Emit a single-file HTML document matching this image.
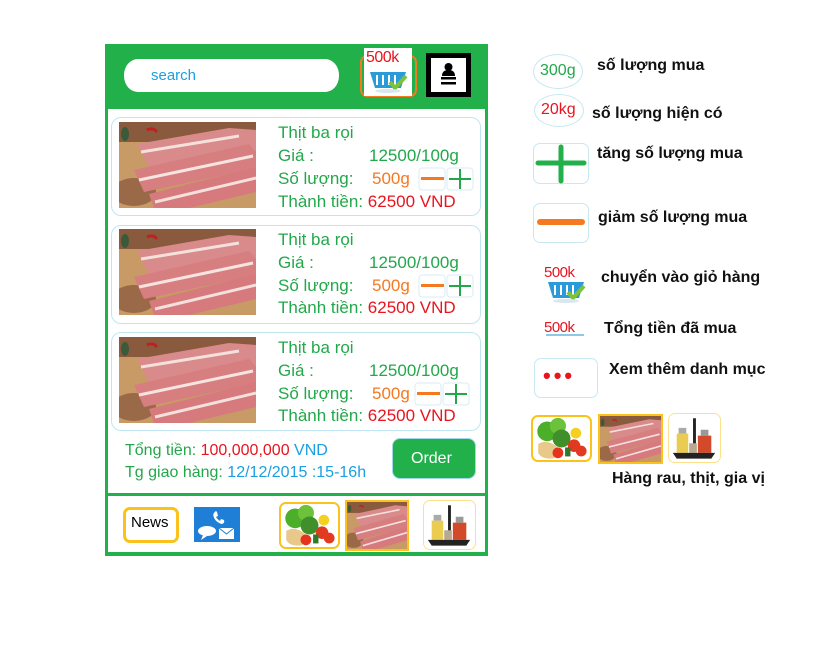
<!DOCTYPE html>
<html><head><meta charset="utf-8"><style>
*{margin:0;padding:0;box-sizing:border-box}
body{width:826px;height:668px;background:#fff;position:relative;overflow:hidden;font-family:"Liberation Sans",sans-serif}
.a{position:absolute}
.g{color:#22a84a}.r{color:#e8141e}.o{color:#f47920}.b{color:#1a9fe0}
.card{position:absolute;left:111px;width:370px;height:99px;border:1.5px solid #bfe6f0;border-radius:10px;background:#fff}
.ct{position:absolute;font-size:17px;white-space:nowrap}
.lg{position:absolute;font-size:16px;font-weight:bold;color:#111;white-space:nowrap}
</style></head><body>
<svg width="0" height="0" style="position:absolute">
<defs>
<symbol id="meat" viewBox="0 0 137 86">
<rect width="137" height="86" fill="#c89a66"/>
<rect y="0" width="137" height="20" fill="#8a5a3e"/>
<ellipse cx="15" cy="70" rx="22" ry="14" fill="#9a6a48"/>
<path d="M18 22 L110 6 L137 8 L137 28 L30 45 Z" fill="#d98a8a"/>
<path d="M22 30 L120 14" stroke="#f4e0dc" stroke-width="3"/>
<path d="M15 48 L130 22 L137 30 L137 46 L25 70 Z" fill="#d77e80"/>
<path d="M20 58 L134 34" stroke="#f6e4e0" stroke-width="3"/>
<path d="M30 72 L137 45 L137 70 L70 86 L35 86 Z" fill="#d67a7e"/>
<path d="M36 80 L137 56" stroke="#f4e0dc" stroke-width="3"/>
<path d="M28 8 q6 -3 10 2" stroke="#c02020" stroke-width="3" fill="none"/>
<ellipse cx="6" cy="12" rx="4" ry="7" fill="#3a5a3a"/>
</symbol>
<symbol id="veg" viewBox="0 0 60 48">
<rect width="60" height="48" fill="#fff"/>
<circle cx="14" cy="16" r="11" fill="#4caf2a"/>
<circle cx="26" cy="10" r="9" fill="#6cc23a"/>
<path d="M4 30 q10 -6 22 4 l-4 12 q-14 2 -18 -6z" fill="#e9c98a"/>
<circle cx="30" cy="24" r="10" fill="#3f8f2a"/>
<circle cx="46" cy="18" r="6" fill="#f4d020"/>
<circle cx="44" cy="32" r="7" fill="#e23a20"/>
<circle cx="52" cy="38" r="6" fill="#e23a20"/>
<circle cx="26" cy="40" r="6" fill="#e5331e"/>
<rect x="34" y="34" width="6" height="10" fill="#2f7a2a"/>
</symbol>
<symbol id="spice" viewBox="0 0 52 48">
<rect width="52" height="48" fill="#fff"/>
<rect x="25" y="4" width="3" height="30" fill="#222"/>
<path d="M8 20 h12 v20 h-12z" fill="#e8c640" opacity=".9"/>
<path d="M10 14 h8 v6 h-8z" fill="#aaa"/>
<path d="M30 22 h14 v18 h-14z" fill="#d24a2a"/>
<path d="M33 16 h8 v6 h-8z" fill="#999"/>
<rect x="21" y="30" width="8" height="10" fill="#b8a890"/>
<path d="M4 40 h44 l-4 6 h-36z" fill="#222"/>
</symbol>
<symbol id="basket" viewBox="0 0 40 34">
<path d="M2 12 h36 l-5 16 h-26z" fill="#2a9bd8"/>
<path d="M9 15 v10 M15 15 v10 M21 15 v10 M27 15 v10" stroke="#fff" stroke-width="2"/>
<path d="M22 22 l5 6 l11 -12" stroke="#7cc23a" stroke-width="4" fill="none"/>
<ellipse cx="20" cy="31" rx="13" ry="2" fill="#d8e8f0"/>
</symbol>
</defs></svg>

<div class="a" style="left:105px;top:44px;width:383px;height:512px;background:#22b04b"></div>
<div class="a" style="left:108px;top:109px;width:377px;height:384px;background:#fff"></div>
<div class="a" style="left:108px;top:496px;width:377px;height:56px;background:#fff"></div>

<div class="a" style="left:124px;top:59px;width:215px;height:33px;background:#fff;border-radius:14px/16px"></div>
<div class="a b" style="left:151px;top:67px;font-size:15px">search</div>
<div class="a" style="left:360px;top:55px;width:57px;height:42px;border:2px solid #f47920;border-radius:7px"></div>
<div class="a" style="left:364px;top:48px;width:48px;height:48px;background:#fff"></div>
<svg class="a" style="left:367px;top:60px" width="42" height="34"><use href="#basket"/></svg>
<div class="a r" style="left:366px;top:49px;font-size:16px;letter-spacing:-.5px">500k</div>
<div class="a" style="left:426px;top:53px;width:45px;height:44px;background:#000"></div>
<div class="a" style="left:431px;top:58px;width:35px;height:34px;background:#fff"></div>
<svg class="a" style="left:431px;top:58px" width="35" height="34"><circle cx="17.5" cy="9" r="4" fill="#000"/><path d="M11 18 q0 -6 6.5 -6 q6.5 0 6.5 6z" fill="#000"/><rect x="10" y="19" width="15" height="2.5"/><rect x="10" y="24" width="15" height="2.5"/></svg>

<div class="card" style="top:117px"></div>
<div class="card" style="top:225px"></div>
<div class="card" style="top:332px"></div>
<svg class="a" style="left:119px;top:122px" width="137" height="86"><use href="#meat"/></svg>
<svg class="a" style="left:119px;top:229px" width="137" height="86"><use href="#meat"/></svg>
<svg class="a" style="left:119px;top:337px" width="137" height="86"><use href="#meat"/></svg>

<div class="ct g" style="left:278px;top:123px">Thịt ba rọi</div>
<div class="ct g" style="left:278px;top:146px">Giá :</div>
<div class="ct g" style="left:369px;top:146px">12500/100g</div>
<div class="ct g" style="left:278px;top:169px">Số lượng:</div>
<div class="ct o" style="left:372px;top:169px">500g</div>
<div class="ct g" style="left:278px;top:192px">Thành tiền: <span class="r">62500 VND</span></div>

<div class="ct g" style="left:278px;top:230px">Thịt ba rọi</div>
<div class="ct g" style="left:278px;top:253px">Giá :</div>
<div class="ct g" style="left:369px;top:253px">12500/100g</div>
<div class="ct g" style="left:278px;top:276px">Số lượng:</div>
<div class="ct o" style="left:372px;top:276px">500g</div>
<div class="ct g" style="left:278px;top:298px">Thành tiền: <span class="r">62500 VND</span></div>

<div class="ct g" style="left:278px;top:338px">Thịt ba rọi</div>
<div class="ct g" style="left:278px;top:361px">Giá :</div>
<div class="ct g" style="left:369px;top:361px">12500/100g</div>
<div class="ct g" style="left:278px;top:384px">Số lượng:</div>
<div class="ct o" style="left:372px;top:384px">500g</div>
<div class="ct g" style="left:278px;top:406px">Thành tiền: <span class="r">62500 VND</span></div>

<svg class="a" style="left:418px;top:166px" width="60" height="26"><rect x="1" y="2" width="26" height="22" rx="3" fill="none" stroke="#d8eef4"/><rect x="29" y="2" width="26" height="22" rx="3" fill="none" stroke="#d8eef4"/><rect x="3" y="11" width="23" height="3" fill="#f47920"/><path d="M31 13 h22 M42 3 v20" stroke="#22a84a" stroke-width="2"/></svg>
<svg class="a" style="left:418px;top:273px" width="60" height="26"><rect x="1" y="2" width="26" height="22" rx="3" fill="none" stroke="#d8eef4"/><rect x="29" y="2" width="26" height="22" rx="3" fill="none" stroke="#d8eef4"/><rect x="3" y="11" width="23" height="3" fill="#f47920"/><path d="M31 13 h22 M42 3 v20" stroke="#22a84a" stroke-width="2"/></svg>
<svg class="a" style="left:414px;top:381px" width="60" height="26"><rect x="1" y="2" width="26" height="22" rx="3" fill="none" stroke="#d8eef4"/><rect x="29" y="2" width="26" height="22" rx="3" fill="none" stroke="#d8eef4"/><rect x="3" y="11" width="23" height="3" fill="#f47920"/><path d="M31 13 h22 M42 3 v20" stroke="#22a84a" stroke-width="2"/></svg>

<div class="ct g" style="left:125px;top:442px;font-size:16px">Tổng tiền: <span class="r">100,000,000</span> <span class="b">VND</span></div>
<div class="ct g" style="left:125px;top:464px;font-size:16px">Tg giao hàng: <span class="b">12/12/2015 :15-16h</span></div>
<div class="a" style="left:392px;top:438px;width:84px;height:41px;background:#22b04b;border-radius:8px;border:1px solid #9fd8e8"></div>
<div class="a" style="left:411px;top:450px;color:#fff;font-size:16px">Order</div>

<div class="a" style="left:123px;top:507px;width:56px;height:36px;border:3px solid #fbc21b;border-radius:7px"></div>
<div class="a" style="left:131px;top:514px;font-size:15px">News</div>
<div class="a" style="left:194px;top:507px;width:46px;height:35px;background:#1f7ed6"></div>
<svg class="a" style="left:194px;top:507px" width="46" height="35"><path d="M22 4 q-4 2 -2 7 q3 5 8 6 q3 -1 2 -4 l-3 -1 l-1 2 q-3 -2 -4 -4 l2 -1 l-1 -4z" fill="#fff"/><ellipse cx="13" cy="24" rx="9" ry="5" fill="#fff"/><path d="M9 28 l-2 5 l6 -4z" fill="#fff"/><rect x="25" y="21" width="15" height="11" fill="#fff"/><path d="M25 21 l7.5 6 l7.5 -6" stroke="#1f7ed6" fill="none"/></svg>
<div class="a" style="left:279px;top:502px;width:61px;height:47px;border:2px solid #fbc21b;border-radius:7px;overflow:hidden"><svg width="57" height="43"><use href="#veg"/></svg></div>
<div class="a" style="left:345px;top:500px;width:64px;height:51px;border:2px solid #fbc21b;overflow:hidden"><svg width="60" height="47" viewBox="0 0 137 86" preserveAspectRatio="none"><use href="#meat"/></svg></div>
<div class="a" style="left:423px;top:500px;width:53px;height:50px;border:1.5px solid #fde08a;border-radius:7px;overflow:hidden"><svg width="50" height="47"><use href="#spice"/></svg></div>

<div class="a" style="left:533px;top:54px;width:50px;height:35px;border:1px solid #c8e8f2;border-radius:50%"></div>
<div class="a g" style="left:540px;top:62px;font-size:16px">300g</div>
<div class="lg" style="left:597px;top:57px">số lượng mua</div>
<div class="a" style="left:534px;top:94px;width:50px;height:33px;border:1px solid #c8e8f2;border-radius:50%"></div>
<div class="a r" style="left:541px;top:101px;font-size:16px">20kg</div>
<div class="lg" style="left:592px;top:105px">số lượng hiện có</div>
<div class="a" style="left:533px;top:143px;width:56px;height:41px;border:1px solid #c8e8f2;border-radius:7px"></div>
<svg class="a" style="left:533px;top:143px" width="56" height="41"><path d="M5 20 h46 M28 4 v34" stroke="#22b04b" stroke-width="5" stroke-linecap="round"/></svg>
<div class="lg" style="left:597px;top:145px">tăng số lượng mua</div>
<div class="a" style="left:533px;top:203px;width:56px;height:40px;border:1px solid #c8e8f2;border-radius:7px"></div>
<div class="a" style="left:537px;top:219px;width:48px;height:6px;background:#f47920;border-radius:3px"></div>
<div class="lg" style="left:598px;top:209px">giảm số lượng mua</div>
<svg class="a" style="left:545px;top:270px" width="42" height="34"><use href="#basket"/></svg>
<div class="a r" style="left:544px;top:264px;font-size:15px;letter-spacing:-.5px">500k</div>
<div class="lg" style="left:601px;top:269px">chuyển vào giỏ hàng</div>
<div class="a r" style="left:544px;top:319px;font-size:15px;letter-spacing:-.5px">500k</div>
<div class="a" style="left:546px;top:334px;width:38px;height:2px;background:#8cc8e8"></div>
<div class="lg" style="left:604px;top:320px">Tổng tiền đã mua</div>
<div class="a" style="left:534px;top:358px;width:64px;height:40px;border:1px solid #c8e8f2;border-radius:7px"></div>
<div class="a r" style="left:543px;top:363px;font-size:22px;letter-spacing:3px;font-weight:bold">•••</div>
<div class="lg" style="left:609px;top:361px">Xem thêm danh mục</div>
<div class="a" style="left:531px;top:415px;width:61px;height:47px;border:2px solid #fbc21b;border-radius:7px;overflow:hidden"><svg width="57" height="43"><use href="#veg"/></svg></div>
<div class="a" style="left:598px;top:414px;width:65px;height:50px;border:2px solid #fbc21b;overflow:hidden"><svg width="61" height="46" viewBox="0 0 137 86" preserveAspectRatio="none"><use href="#meat"/></svg></div>
<div class="a" style="left:668px;top:413px;width:53px;height:50px;border:1.5px solid #fde08a;border-radius:7px;overflow:hidden"><svg width="50" height="47"><use href="#spice"/></svg></div>
<div class="lg" style="left:612px;top:470px">Hàng rau, thịt, gia vị</div>
</body></html>
